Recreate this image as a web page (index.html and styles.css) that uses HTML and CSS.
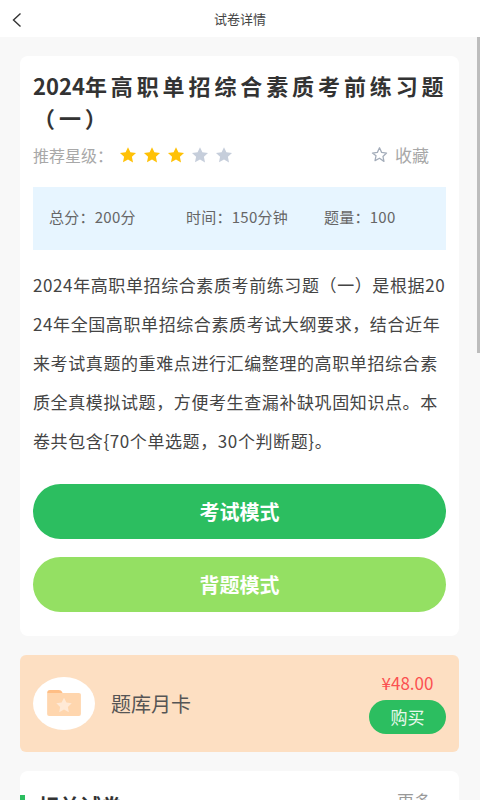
FILE: index.html
```html
<!DOCTYPE html>
<html lang="zh-CN">

<head>
    <meta charset="UTF-8">
    <meta name="viewport" content="width=device-width, initial-scale=1.0">
    <title>试卷详情</title>
    <link rel="stylesheet" href="styles.css">
</head>

<body>
    <div class="page">
        <header class="nav">
            <svg class="nav-back" viewBox="0 0 12 16" width="12" height="16">
                <path d="M9.5 1.5 L2.5 8 L9.5 14.5" fill="none" stroke="#333" stroke-width="1.4" />
            </svg>
            <span class="nav-title">试卷详情</span>
        </header>

        <main class="content">
            <section class="card paper">
                <h1 class="paper-title"><span class="paper-year">2024</span>年高职单招综合素质考前练习题（一）</h1>

                <div class="meta">
                    <span class="meta-label">推荐星级：</span>
                    <div class="stars">
                        <svg class="star" viewBox="0 0 24 24"><path fill="#ffc107" d="M12 1.5l3.2 6.9 7.5.9-5.5 5.1 1.5 7.5L12 17.9l-6.7 3.9 1.5-7.5L1.3 9.3l7.5-.9z" /></svg>
                        <svg class="star" viewBox="0 0 24 24"><path fill="#ffc107" d="M12 1.5l3.2 6.9 7.5.9-5.5 5.1 1.5 7.5L12 17.9l-6.7 3.9 1.5-7.5L1.3 9.3l7.5-.9z" /></svg>
                        <svg class="star" viewBox="0 0 24 24"><path fill="#ffc107" d="M12 1.5l3.2 6.9 7.5.9-5.5 5.1 1.5 7.5L12 17.9l-6.7 3.9 1.5-7.5L1.3 9.3l7.5-.9z" /></svg>
                        <svg class="star" viewBox="0 0 24 24"><path fill="#c6cedb" d="M12 1.5l3.2 6.9 7.5.9-5.5 5.1 1.5 7.5L12 17.9l-6.7 3.9 1.5-7.5L1.3 9.3l7.5-.9z" /></svg>
                        <svg class="star" viewBox="0 0 24 24"><path fill="#c6cedb" d="M12 1.5l3.2 6.9 7.5.9-5.5 5.1 1.5 7.5L12 17.9l-6.7 3.9 1.5-7.5L1.3 9.3l7.5-.9z" /></svg>
                    </div>
                    <div class="collect">
                        <svg class="star-outline" viewBox="0 0 24 24"><path fill="none" stroke="#a4adba" stroke-width="1.8" stroke-linejoin="round" d="M12 2.5l3 6.5 7 .9-5.1 4.8 1.4 7L12 17.2l-6.3 3.5 1.4-7L2 9.9l7-.9z" /></svg>
                        <span>收藏</span>
                    </div>
                </div>

                <div class="stats">
                    <span class="stat stat-score">总分：200分</span>
                    <span class="stat stat-time">时间：150分钟</span>
                    <span class="stat">题量：100</span>
                </div>

                <p class="desc">2024年高职单招综合素质考前练习题（一）是根据2024年全国高职单招综合素质考试大纲要求，结合近年来考试真题的重难点进行汇编整理的高职单招综合素质全真模拟试题，方便考生查漏补缺巩固知识点。本卷共包含{70个单选题，30个判断题}。</p>

                <button class="mode-btn mode-exam">考试模式</button>
                <button class="mode-btn mode-recite">背题模式</button>
            </section>

            <section class="vip">
                <div class="vip-icon">
                    <svg viewBox="0 0 36 28" width="35" height="27">
                        <path fill="#ffbe85" d="M0 3 Q0 0 3 0 H12 Q15 0 16 3 H0z" />
                        <path fill="#ffd6ae" d="M0 3 H33 Q35 3 35 5 V25 Q35 27 33 27 H2 Q0 27 0 25z" />
                        <path fill="#ffe9d6" d="M17.5 8l2.5 5 5.5.7-4 3.8 1 5.5-5-2.7-5 2.7 1-5.5-4-3.8 5.5-.7z" />
                    </svg>
                </div>
                <span class="vip-name">题库月卡</span>
                <div class="vip-buy">
                    <span class="vip-price">¥48.00</span>
                    <button class="buy-btn">购买</button>
                </div>
            </section>

            <section class="card related">
                <div class="related-head">
                    <h2 class="related-title">相关试卷</h2>
                    <span class="related-more">更多 ›</span>
                </div>
            </section>
        </main>

        <div class="scrollbar"></div>
    </div>
</body>

</html>
```

FILE: styles.css
```css
* {
    box-sizing: border-box;
    margin: 0;
    padding: 0;
}

html,
body {
    height: 800px;
    overflow: hidden;
}

body {
    font-family: "Noto Sans CJK SC", "Noto Sans", sans-serif;
    background-color: #f8f8f8;
    color: #333;
}

.page {
    position: relative;
    height: 800px;
    overflow: hidden;
}

.nav {
    position: relative;
    height: 37px;
    background-color: white;
    display: flex;
    align-items: center;
    justify-content: center;
}

.nav-back {
    position: absolute;
    left: 11px;
    top: 12px;
}

.nav-title {
    font-size: 13px;
    color: #444;
}

.content {
    padding: 19px 21px 0 20px;
    display: flex;
    flex-direction: column;
    gap: 19px;
}

.card {
    background-color: white;
    border-radius: 8px;
}

.paper {
    padding: 13px 13px 24px 13px;
}

.paper-title {
    margin-right: -4px;
    font-size: 22px;
    line-height: 32px;
    font-weight: 700;
    letter-spacing: 3.9px;
    color: #333;
}

.paper-year {
    letter-spacing: 0;
}

.meta {
    display: flex;
    align-items: center;
    height: 30px;
    margin-top: 8px;
    padding-bottom: 3px;
    font-size: 16px;
    color: #a8a8a8;
}

.meta-label {
    width: 86px;
}

.stars {
    display: flex;
    gap: 6px;
}

.star {
    width: 18px;
    height: 18px;
}

.collect {
    margin-left: auto;
    margin-right: 17px;
    display: flex;
    align-items: center;
    gap: 7px;
    font-size: 17px;
}

.star-outline {
    width: 17px;
    height: 17px;
}

.stats {
    display: flex;
    align-items: center;
    height: 63px;
    margin-top: 16px;
    padding: 0 0 4px 16px;
    background-color: #e7f5ff;
    font-size: 15px;
    letter-spacing: 0.25px;
    color: #666;
}

.stat-score {
    width: 137px;
}

.stat-time {
    width: 138px;
}

.desc {
    margin-top: 15px;
    font-size: 17px;
    line-height: 39px;
    letter-spacing: 0.6px;
    color: #444;
    word-break: break-all;
}

.mode-btn {
    display: block;
    width: 100%;
    height: 55px;
    border: none;
    border-radius: 28px;
    color: white;
    font-family: inherit;
    font-size: 20px;
    font-weight: 700;
}

.mode-exam {
    margin-top: 24px;
    background-color: #2cbe60;
}

.mode-recite {
    margin-top: 18px;
    background-color: #94e063;
}

.vip {
    height: 97px;
    padding: 0 13px;
    display: flex;
    align-items: center;
    background-color: #fddfc2;
    border-radius: 6px;
}

.vip-icon {
    width: 62px;
    height: 53px;
    border-radius: 50%;
    background-color: white;
    display: flex;
    align-items: center;
    justify-content: center;
}

.vip-name {
    margin-left: 16px;
    font-size: 20px;
    color: #555;
}

.vip-buy {
    margin-left: auto;
    padding-bottom: 2px;
    display: flex;
    flex-direction: column;
    align-items: center;
    gap: 6px;
}

.vip-price {
    font-size: 17px;
    line-height: 22px;
    color: #fb5050;
}

.buy-btn {
    width: 77px;
    height: 34px;
    border: none;
    border-radius: 17px;
    background-color: #2cbe60;
    color: #e8f8ec;
    font-family: inherit;
    font-size: 17px;
}

.related {
    height: 80px;
    position: relative;
}

.related-head {
    display: flex;
    align-items: flex-start;
    justify-content: space-between;
    padding: 18px 19px 0 18px;
}

.related-head::before {
    content: "";
    position: absolute;
    left: 0;
    top: 24px;
    width: 5px;
    height: 20px;
    background-color: #2cbe60;
}

.related-title {
    font-size: 21px;
    line-height: 32px;
    font-weight: 700;
    color: #333;
}

.related-more {
    font-size: 17px;
    line-height: 24px;
    color: #999;
}

.scrollbar {
    position: absolute;
    right: 0;
    top: 37px;
    width: 3px;
    height: 316px;
    background-color: #bdbdbd;
}
```
